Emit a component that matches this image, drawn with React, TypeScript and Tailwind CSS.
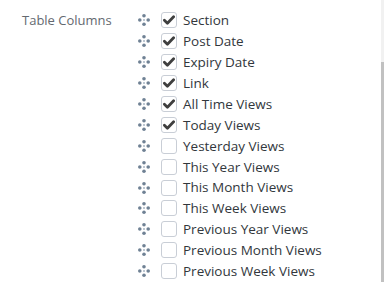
import React from 'react';

const COLUMNS = [
  { label: 'Section', checked: true },
  { label: 'Post Date', checked: true },
  { label: 'Expiry Date', checked: true },
  { label: 'Link', checked: true },
  { label: 'All Time Views', checked: true },
  { label: 'Today Views', checked: true },
  { label: 'Yesterday Views', checked: false },
  { label: 'This Year Views', checked: false },
  { label: 'This Month Views', checked: false },
  { label: 'This Week Views', checked: false },
  { label: 'Previous Year Views', checked: false },
  { label: 'Previous Month Views', checked: false },
  { label: 'Previous Week Views', checked: false },
];

// four-dot move handle
const DragHandle = () => (
  <svg width="12" height="12" viewBox="0 0 12 12" className="shrink-0">
    <circle cx="6" cy="1.8" r="1.8" fill="#6f8194" />
    <circle cx="1.8" cy="6" r="1.8" fill="#6f8194" />
    <circle cx="10.2" cy="6" r="1.8" fill="#6f8194" />
    <circle cx="6" cy="10.2" r="1.8" fill="#6f8194" />
    <circle cx="6" cy="6" r="1" fill="#a9b5c2" />
  </svg>
);

const Checkbox = ({ checked }: { checked: boolean }) => (
  <span className="w-4 h-4 shrink-0 rounded-[3px] border border-[#c9ced6] bg-white flex items-center justify-center">
    {checked && (
      <svg width="12" height="10" viewBox="0 0 12 10">
        <path d="M1.4 5.2 L4.4 8.2 L10.6 1.8" fill="none" stroke="#3f3f3f" strokeWidth="2.8" strokeLinecap="round" strokeLinejoin="round" />
      </svg>
    )}
  </span>
);

export default function App() {
  return (
    <div className="relative w-[384px] h-[282px] bg-white overflow-hidden" style={{ fontFamily: '"Open Sans", "Noto Sans", sans-serif' }}>
      <div className="flex pt-[10px]">
        {/* Label column */}
        <div className="w-[138px] pl-[22px] text-[13px] leading-[21px] text-[#646970]">
          Table Columns
        </div>

        {/* Sortable checkbox list */}
        <div className="flex flex-col">
          {COLUMNS.map((col) => (
            <div key={col.label} className="flex items-center h-[20.9px]">
              <DragHandle />
              <span className="w-[11px]" />
              <Checkbox checked={col.checked} />
              <span className="ml-[6px] text-[13.5px] text-[#32373c] whitespace-nowrap">{col.label}</span>
            </div>
          ))}
        </div>
      </div>

      {/* page scrollbar */}
      <div className="absolute right-0 top-0 w-[3px] h-full bg-[#f1f1f1]">
        <div className="mt-[62px] h-[220px] bg-[#c1c1c1]" />
      </div>
    </div>
  );
}
